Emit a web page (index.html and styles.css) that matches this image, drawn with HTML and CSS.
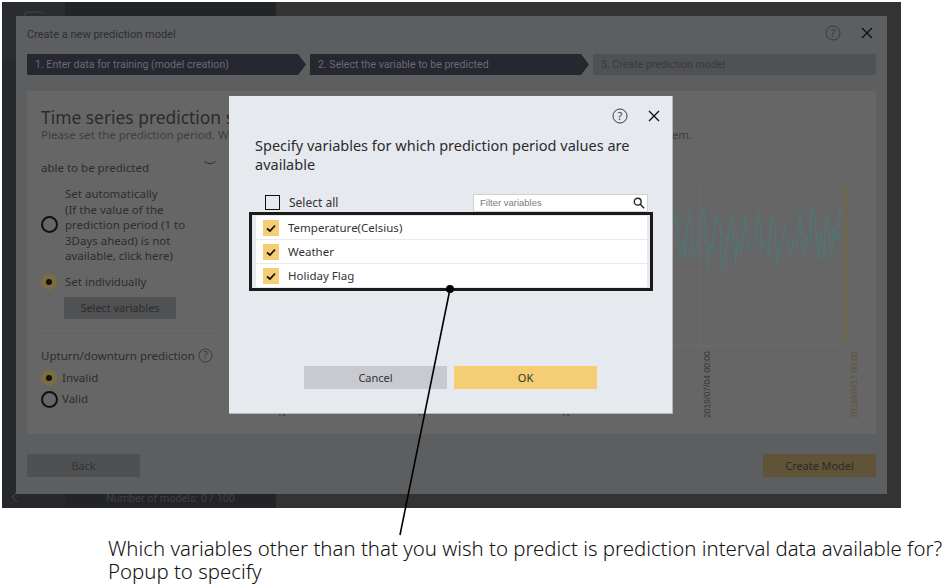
FILE: index.html
```html
<!DOCTYPE html>
<html lang="en">
<head>
    <title>Create a new prediction model</title>
    <link rel="stylesheet" href="styles.css">
</head>
<body>
    <div class="shot">
        <div class="sidebar">
            <div class="nav">
                <div class="nav-item"><svg viewBox="0 0 20 8"><path d="M1 7V2L4 1H18L19 3"/></svg></div>
                <svg class="collapse" viewBox="0 0 8 12"><path d="M6 1L1 6L6 11"/></svg>
            </div>
            <div class="models">Number of models: 0 / 100</div>
        </div>
        <div class="modal">
            <div class="modal-head">
                <span>Create a new prediction model</span>
                <svg class="help" viewBox="0 0 16 16"><circle cx="8" cy="8" r="7"/><text x="8" y="11.5">?</text></svg>
                <svg class="close" viewBox="0 0 12 12"><path d="M1 1L11 11M11 1L1 11"/></svg>
            </div>
            <div class="steps">
                <div class="step step-one">1. Enter data for training (model creation)</div>
                <div class="step step-two">2. Select the variable to be predicted</div>
                <div class="step step-three">3. Create prediction model</div>
            </div>
            <div class="panel">
                <div class="options">
                    <div class="panel-title">Time series prediction s</div>
                    <div class="panel-sub"><span>Please set the prediction period. W</span><span>em.</span></div>
                    <div class="target">
                        <span>able to be predicted</span>
                        <svg viewBox="0 0 12 4"><path d="M0.5 0.5Q6 5 11.5 0.5"/></svg>
                    </div>
                    <div class="radio-row auto">
                        <span class="radio"></span>
                        <span>Set automatically<br>(If the value of the<br>prediction period (1 to<br>3Days ahead) is not<br>available, click here)</span>
                    </div>
                    <div class="radio-row">
                        <span class="radio on"></span>
                        <span>Set individually</span>
                    </div>
                    <div class="select-btn">Select variables</div>
                    <div class="updown">Upturn/downturn prediction
                        <svg class="help small" viewBox="0 0 16 16"><circle cx="8" cy="8" r="7"/><text x="8" y="11.5">?</text></svg>
                    </div>
                    <div class="radio-row tight">
                        <span class="radio on"></span>
                        <span>Invalid</span>
                    </div>
                    <div class="radio-row tight">
                        <span class="radio"></span>
                        <span>Valid</span>
                    </div>
                </div>
            </div>
            <div class="modal-foot">
                <div class="foot-btn back">Back</div>
                <div class="foot-btn create">Create Model</div>
            </div>
        </div>

        <svg class="chart" viewBox="0 0 200 240">
            <line class="grid" x1="0" y1="166" x2="179" y2="166"/>
            <line class="grid" x1="30" y1="5" x2="30" y2="166"/>
            <rect class="band" x="173" y="5" width="6" height="161"/>
            <g transform="scale(0.3333)">
                <polyline class="series" points="12,130 20,98 28,230 32,240 38,175 45,225 55,105 62,93 67,238 75,232 88,170 95,120 102,87 113,270 120,190 127,215 137,108 143,128 150,125 156,268 163,262 170,172 175,182 180,115 187,113 197,252 203,168 209,210 215,210 226,112 233,208 240,210 255,185 261,98 268,100 275,210 283,185 297,232 303,115 315,140 321,260 327,210 333,207 344,143 350,160 356,212 362,222 368,185 374,200 380,203 386,125 392,97 397,205 404,222 409,170 415,188 420,188 426,80 433,85 445,240 451,162 462,238 468,98 474,105 480,208 486,218 491,142 497,175 503,180 509,85 522,85"/>
            </g>
            <text class="tick" transform="translate(40 238) rotate(-90)">2019/07/04 00:00</text>
            <text class="tick gold" transform="translate(187 238) rotate(-90)">2019/09/17 00:00</text>
        </svg>
        <span class="stub stub-a">2</span>
        <span class="stub stub-b">2</span>
        <span class="stub stub-c">2</span>

        <div class="popup">
            <div class="popup-icons">
                <svg class="help" viewBox="0 0 16 16"><circle cx="8" cy="8" r="7"/><text x="8" y="11.5">?</text></svg>
                <svg class="close" viewBox="0 0 12 12"><path d="M1 1L11 11M11 1L1 11"/></svg>
            </div>
            <div class="popup-title">Specify variables for which prediction period values are available</div>
            <div class="filter-row">
                <span class="box"></span>
                <span class="select-all">Select all</span>
                <div class="filter">
                    <span>Filter variables</span>
                    <svg viewBox="0 0 14 14"><circle cx="5.5" cy="5.5" r="4"/><path d="M8.5 8.5L13 13"/></svg>
                </div>
            </div>
            <div class="var-list">
                <div class="var-row">
                    <span class="check"><svg viewBox="0 0 16 16"><path d="M4 8.5L7 11L12 5.5"/></svg></span>
                    <span>Temperature(Celsius)</span>
                </div>
                <div class="var-row">
                    <span class="check"><svg viewBox="0 0 16 16"><path d="M4 8.5L7 11L12 5.5"/></svg></span>
                    <span>Weather</span>
                </div>
                <div class="var-row">
                    <span class="check"><svg viewBox="0 0 16 16"><path d="M4 8.5L7 11L12 5.5"/></svg></span>
                    <span>Holiday Flag</span>
                </div>
            </div>
            <div class="popup-btns">
                <div class="popup-btn cancel">Cancel</div>
                <div class="popup-btn ok">OK</div>
            </div>
        </div>
    </div>

    <div class="highlight"></div>
    <svg class="leader" viewBox="0 0 948 585">
        <circle cx="450" cy="289" r="4"/>
        <line x1="450" y1="289" x2="400" y2="535"/>
    </svg>
    <p class="note">Which variables other than that you wish to predict is prediction interval data available for?<br>Popup to specify</p>
</body>
</html>
```

FILE: styles.css
```css
html, body {
    margin: 0;
    height: 585px;
    overflow: hidden;
    background: #fff;
}
body {
    position: relative;
    font-family: "Noto Sans", "Open Sans", sans-serif;
    color: #333;
}
.shot {
    position: absolute;
    left: 2px;
    top: 2px;
    width: 899px;
    height: 506px;
    background: #333;
    overflow: hidden;
}
.sidebar {
    position: absolute;
    left: 0;
    top: 0;
    width: 274px;
    height: 506px;
    background: #232428;
}
.nav {
    position: relative;
    width: 63px;
    height: 506px;
    background: #26282c;
}
.nav-item {
    height: 57px;
    background: #2b2c30;
}
.nav-item svg {
    display: block;
    width: 20px;
    height: 8px;
    margin-left: 22px;
    padding-top: 9px;
}
.nav-item path {
    fill: none;
    stroke: #44454a;
}
.collapse {
    position: absolute;
    left: 9px;
    top: 489px;
    width: 8px;
    height: 12px;
}
.collapse path {
    fill: none;
    stroke: #4a4b50;
}
.models {
    position: absolute;
    left: 104px;
    top: 490px;
    font-family: Roboto, sans-serif;
    font-size: 10.8px;
    color: #3f4045;
}

/* dimmed dialog */
.modal {
    position: absolute;
    left: 14px;
    top: 14px;
    width: 871px;
    height: 478px;
    background: #5c5e60;
    display: flex;
    flex-direction: column;
}
.modal-head {
    display: flex;
    align-items: center;
    height: 34px;
    padding: 0 12px 0 11px;
    font-family: Roboto, sans-serif;
    font-size: 11px;
    color: #2e2f31;
}
.modal-head span {
    flex: 1;
    padding-top: 2px;
}
.help {
    width: 16px;
    height: 16px;
    flex: none;
}
.help circle {
    fill: none;
    stroke: #3a3a3c;
    stroke-width: 1;
}
.help text {
    font-family: "Noto Sans", sans-serif;
    font-size: 11px;
    text-anchor: middle;
    fill: #3a3a3c;
}
.close {
    width: 12px;
    height: 12px;
    margin-left: 20px;
    flex: none;
}
.close path {
    fill: none;
    stroke: #111;
    stroke-width: 1.4;
}
.modal-head .close {
    margin-right: 2px;
}
.steps {
    display: flex;
    gap: 4px;
    margin: 4px 11px 0;
    height: 21px;
    font-family: Roboto, sans-serif;
    font-size: 10.6px;
    line-height: 21px;
}
.step {
    padding-left: 8px;
    box-sizing: border-box;
}
.step-one, .step-two {
    background: #26272f;
    color: #6a6b70;
    clip-path: polygon(0 0, calc(100% - 8px) 0, 100% 50%, calc(100% - 8px) 100%, 0 100%);
}
.step-one { width: 279px; }
.step-two { width: 279px; }
.step-three {
    flex: 1;
    background: #505152;
    color: #38393a;
}
.panel {
    margin: 16px 11px 0;
    height: 343px;
    background: #666;
}
.options {
    width: 190px;
    padding: 16px 0 0 14px;
    font-size: 11.5px;
    color: #2c2d2e;
    white-space: nowrap;
}
.panel-title {
    font-size: 17.4px;
    line-height: 20px;
    height: 20px;
    color: #2a2b2c;
}
.panel-sub {
    display: flex;
    justify-content: space-between;
    width: 651px;
    margin-top: 1px;
    font-size: 11.5px;
    line-height: 14px;
    color: #3d3e3f;
}
.target {
    display: flex;
    justify-content: space-between;
    width: 175px;
    margin-top: 17px;
    line-height: 18px;
}
.target svg {
    width: 12px;
    height: 4px;
    margin-top: 2px;
}
.target path {
    fill: none;
    stroke: #2c2d2e;
}
.radio-row {
    display: flex;
    align-items: center;
    gap: 7px;
    line-height: 15.5px;
}
.auto {
    margin-top: 9px;
    margin-bottom: 10px;
}
.radio {
    width: 13px;
    height: 13px;
    border: 2px solid #111;
    border-radius: 50%;
    flex: none;
}
.radio.on {
    position: relative;
    width: 16px;
    height: 16px;
    margin-right: 1px;
    border: 0;
    background: #7d6b42;
}
.radio.on::after {
    content: "";
    position: absolute;
    left: 5px;
    top: 5px;
    width: 6px;
    height: 6px;
    border-radius: 50%;
    background: #111;
}
.select-btn {
    width: 112px;
    height: 22px;
    margin: 7px 0 0 23px;
    background: #505152;
    text-align: center;
    line-height: 22px;
    font-size: 10.9px;
}
.updown {
    display: flex;
    align-items: center;
    gap: 3px;
    width: 175px;
    margin-top: 14px;
    margin-bottom: 4px;
    padding-top: 14px;
    border-top: 1px solid #5f6061;
    font-size: 11.5px;
    line-height: 16px;
}
.help.small {
    width: 15px;
    height: 15px;
}
.tight {
    height: 21px;
    margin-top: 0;
    gap: 4px;
}
.modal-foot {
    display: flex;
    justify-content: space-between;
    margin: 20px 11px 0;
}
.foot-btn {
    width: 113px;
    height: 23px;
    text-align: center;
    line-height: 23px;
    font-size: 10.9px;
}
.back {
    background: #4f5051;
    color: #333;
}
.create {
    background: #5f5437;
    color: #2b2a25;
}

/* chart sits between the dialog and the popup */
.chart {
    position: absolute;
    left: 668px;
    top: 178px;
    width: 200px;
    height: 240px;
}
.grid {
    stroke: #6c6c6c;
    stroke-width: 1;
}
.band {
    fill: #6a6653;
}
.series {
    fill: none;
    stroke: #4a7a79;
    stroke-width: 3.2;
}
.tick {
    font-family: "Liberation Sans", sans-serif;
    font-size: 8.6px;
    fill: #38393a;
}
.tick.gold {
    fill: #5f5437;
}
.stub {
    position: absolute;
    top: 407px;
    font-family: "Liberation Sans", sans-serif;
    font-size: 8.6px;
    line-height: 10px;
    color: #38393a;
    transform: rotate(-90deg);
}
.stub-a { left: 278px; }
.stub-b { left: 418px; }
.stub-c { left: 562px; }

/* popup */
.popup {
    position: absolute;
    left: 227px;
    top: 94px;
    width: 444px;
    height: 318px;
    box-sizing: border-box;
    padding: 0 24px 0 26px;
    background: #e6e9ee;
    border-right: 1px solid #b5b6b8;
    border-bottom: 1px solid #b5b6b8;
    display: flex;
    flex-direction: column;
}
.popup-icons {
    display: flex;
    justify-content: flex-end;
    align-items: center;
    height: 40px;
    margin-right: -12px;
}
.popup-icons .close {
    margin-left: 20px;
}
.popup-title {
    font-size: 14.5px;
    line-height: 19px;
    color: #2b2c2e;
}
.filter-row {
    display: flex;
    align-items: center;
    margin-top: 19px;
    height: 19px;
    font-size: 12px;
}
.box {
    width: 13px;
    height: 13px;
    border: 1.5px solid #111;
    margin-left: 10px;
}
.select-all {
    margin-left: 9px;
    flex: 1;
}
.filter {
    display: flex;
    align-items: center;
    justify-content: space-between;
    box-sizing: border-box;
    width: 175px;
    height: 18px;
    padding: 0 2px 0 6px;
    background: #fff;
    border: 1px solid #d0d2d6;
    font-family: "Liberation Sans", sans-serif;
    font-size: 9.5px;
    color: #7c7c7c;
}
.filter svg {
    width: 12px;
    height: 12px;
}
.filter circle, .filter path {
    fill: none;
    stroke: #222;
    stroke-width: 1.6;
}
.var-list {
    margin: 4px 1px 0;
    display: flex;
    flex-direction: column;
    gap: 1px;
}
.var-row {
    display: flex;
    align-items: center;
    gap: 9px;
    height: 23px;
    padding-left: 7px;
    background: #fff;
    font-size: 11.5px;
}
.check {
    width: 16px;
    height: 16px;
    background: #f4cd74;
    flex: none;
}
.check svg {
    display: block;
    width: 16px;
    height: 16px;
}
.check path {
    fill: none;
    stroke: #111;
    stroke-width: 1.7;
}
.popup-btns {
    display: flex;
    gap: 7px;
    margin: 79px 0 0 49px;
}
.popup-btn {
    width: 143px;
    height: 23px;
    text-align: center;
    line-height: 23px;
    font-size: 11px;
}
.cancel {
    background: #c8cacf;
}
.ok {
    background: #f4cd74;
}

/* annotation on top of the screenshot */
.highlight {
    position: absolute;
    left: 249px;
    top: 212px;
    width: 398px;
    height: 73px;
    border: 3px solid #1a1a1a;
}
.leader {
    position: absolute;
    left: 0;
    top: 0;
    width: 948px;
    height: 585px;
}
.leader circle {
    fill: #000;
}
.leader line {
    stroke: #000;
    stroke-width: 1.6;
}
.note {
    position: absolute;
    left: 108px;
    top: 537px;
    margin: 0;
    font-size: 20.4px;
    font-weight: 300;
    line-height: 23px;
    white-space: nowrap;
    color: #111;
}
```
